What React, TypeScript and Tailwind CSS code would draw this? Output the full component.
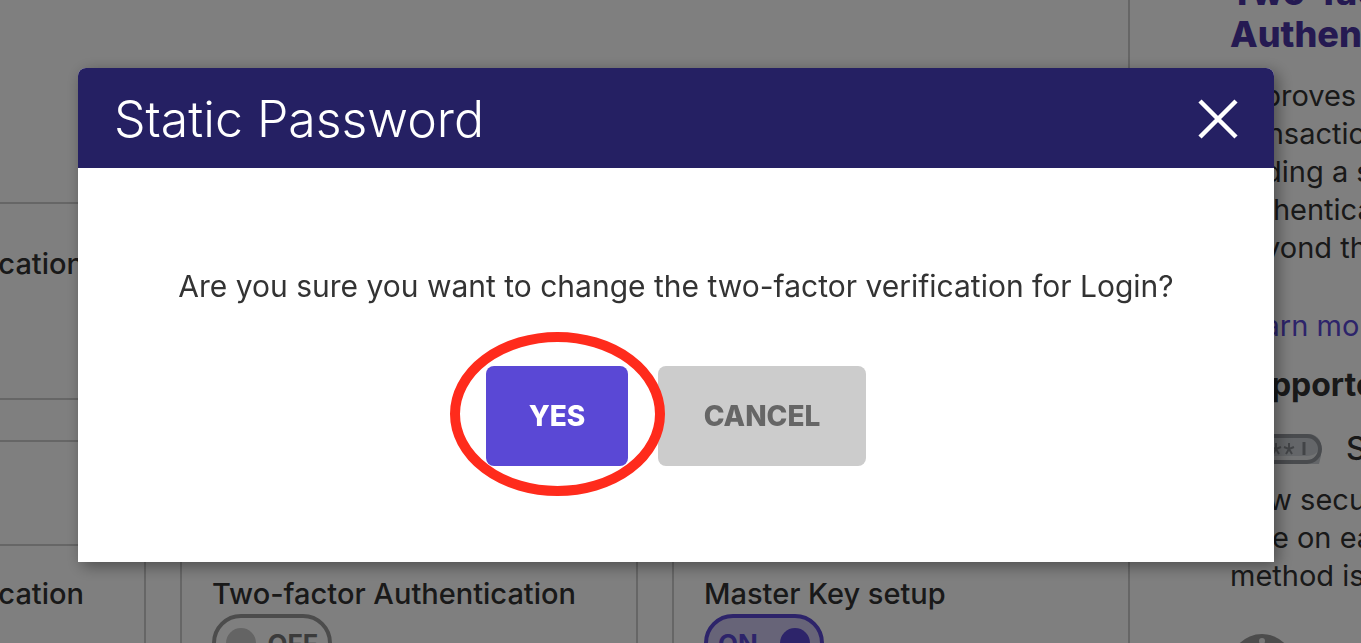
import React, { useState } from 'react';

const factors = [
  { id: 'login', label: 'Two-factor Authentication', enabled: false },
  { id: 'transactions', label: 'Two-factor Authentication', enabled: false },
  { id: 'master', label: 'Master Key setup', enabled: true },
];

function Toggle({ label, initial }: { label: string; initial: boolean }) {
  const [on, setOn] = useState(initial);

  return (
    <button
      type="button"
      role="switch"
      aria-checked={on}
      aria-label={label}
      onClick={() => setOn(!on)}
      className={`flex h-[58px] w-[120px] items-center justify-between rounded-full border-4 px-[10px] text-[26px] font-bold ${
        on
          ? 'flex-row border-[#5a48d5] bg-[#cfc8f0] text-[#5a48d5]'
          : 'flex-row-reverse border-[#999] bg-transparent text-[#777]'
      }`}
    >
      <span>{on ? 'ON' : 'OFF'}</span>
      <span className={`h-[30px] w-[30px] rounded-full ${on ? 'bg-[#5a48d5]' : 'bg-[#c8c8c8]'}`} />
    </button>
  );
}

function PasswordIcon() {
  return (
    <svg viewBox="0 0 92 30" className="h-[30px] w-[92px] shrink-0" fill="none" aria-hidden="true">
      <path d="M15 0h64a12 12 0 0 1 12 12v10l-2 8H15z" fill="#c8cdd2" />
      <path d="M14 26v-4h60c8 0 12-2 14-5-1 6-5 9-11 9z" fill="#e4e6e8" />
      <rect x="2" y="2" width="88" height="26" rx="13" stroke="#92969c" strokeWidth="4" />
      <g stroke="#85898e" strokeWidth="2">
        {[20, 33, 46, 59].map(x => (
          <path key={x} d={`M${x} 9v6M${x} 15l-5-2M${x} 15l5-2M${x} 15l-3 5M${x} 15l3 5`} />
        ))}
        <path d="M74 8v13" strokeWidth="3" />
      </g>
    </svg>
  );
}

function InfoIcon() {
  return (
    <svg viewBox="0 0 64 64" className="h-16 w-16" aria-hidden="true">
      <circle cx="32" cy="32" r="32" fill="#999" />
      <circle cx="32" cy="7" r="3" fill="#eee" />
      <path d="M24 22h12v24h6v5H23v-5h6V27h-5z" fill="#eee" />
    </svg>
  );
}

function SecuritySettings() {
  return (
    <main className="min-w-0 flex-1 overflow-hidden">
      <div className="-ml-[312px]">
        <section className="border-x-2 border-b-2 border-[#ccc]">
          <div className="h-[202px]" />
          <div className="h-[196px] border-t-2 border-[#ccc] px-[30px] pt-[41px]">
            <h3 className="text-[29px] leading-[38px] font-medium">Two-factor Authentication</h3>
          </div>
        </section>

        <section className="mt-10">
          <div className="h-[104px] border-x-2 border-t-2 border-[#ccc]" />
          <div className="border-t-2 border-[#ccc]">
            <div className="flex gap-[34px]">
              {factors.map(factor => (
                <div key={factor.id} className="flex-1 border-x-2 border-[#ccc] px-[30px] pt-[29px] pb-8">
                  <h3 className="mb-px text-[29px] leading-[38px] font-medium whitespace-nowrap">{factor.label}</h3>
                  <Toggle label={factor.label} initial={factor.enabled} />
                </div>
              ))}
            </div>
          </div>
        </section>
      </div>
    </main>
  );
}

function HelpPanel() {
  return (
    <aside className="-mt-[29px] w-[231px] shrink-0 overflow-hidden pl-[100px] text-[29px] leading-[38px] whitespace-nowrap">
      <h2 className="text-[36px] leading-[42px] font-extrabold text-[#4a35a4]">
        Two-factor
        <br />
        Authentication
      </h2>
      <p className="mt-[22px]">
        Improves
        <br />
        transactions
        <br />
        adding a second
        <br />
        authentication
        <br />
        beyond the
      </p>
      <a href="#learn-more" className="mt-10 block text-[#5a48d5]">
        Learn more
      </a>
      <h3 className="mt-[21px] text-[32px] leading-[38px] font-bold">Supported</h3>
      <div className="mt-[26px] flex items-center gap-6">
        <PasswordIcon />
        <span className="text-[32px] leading-[38px] font-medium">Static Password</span>
      </div>
      <p className="mt-[13px]">
        New security
        <br />
        time on each
        <br />
        method is
      </p>
      <div className="mt-[39px]">
        <InfoIcon />
      </div>
    </aside>
  );
}

function ConfirmDialog({ onClose }: { onClose: () => void }) {
  return (
    <div className="fixed inset-0 bg-black/50 pt-[68px] pr-[87px] pl-[78px]">
      <div
        role="dialog"
        aria-modal="true"
        aria-labelledby="dialog-title"
        className="rounded-t-lg bg-white shadow-[4px_4px_16px_rgba(0,0,0,0.4)]"
      >
        <header className="flex h-[100px] items-center justify-between rounded-t-lg bg-[#252063] px-9 pt-0.5 text-white">
          <h1 id="dialog-title" className="text-[50px] leading-[50px] font-light">
            Static Password
          </h1>
          <button type="button" aria-label="Close" onClick={onClose}>
            <svg viewBox="0 0 40 40" className="h-10 w-10" stroke="currentColor" strokeWidth="4.5" aria-hidden="true">
              <path d="M2 2l36 36M38 2L2 38" />
            </svg>
          </button>
        </header>

        <div className="flex flex-col items-center px-9 pt-[98px] pb-24">
          <p className="text-center text-[30px] leading-10">
            Are you sure you want to change the two-factor verification for Login?
          </p>
          <div className="mt-[60px] flex gap-[30px] text-[28px] font-extrabold">
            <div className="relative">
              <button type="button" onClick={onClose} className="h-[100px] w-[142px] rounded-lg bg-[#5a48d5] text-white">
                YES
              </button>
              <svg
                viewBox="0 0 216 164"
                className="pointer-events-none absolute -top-[34px] -left-9 z-10 h-[164px] w-[216px] max-w-none"
                fill="none"
                aria-hidden="true"
              >
                <ellipse cx="107.5" cy="82" rx="102.5" ry="77" stroke="#ff2b1c" strokeWidth="10" />
              </svg>
            </div>
            <button type="button" onClick={onClose} className="h-[100px] w-[208px] rounded-lg bg-[#ccc] text-[#666]">
              CANCEL
            </button>
          </div>
        </div>
      </div>
    </div>
  );
}

export default function App() {
  const [showDialog, setShowDialog] = useState(true);

  return (
    <div className="h-screen overflow-hidden bg-white font-['Inter',sans-serif] text-[#333]">
      <div className="flex">
        <SecuritySettings />
        <HelpPanel />
      </div>
      {showDialog && <ConfirmDialog onClose={() => setShowDialog(false)} />}
    </div>
  );
}
